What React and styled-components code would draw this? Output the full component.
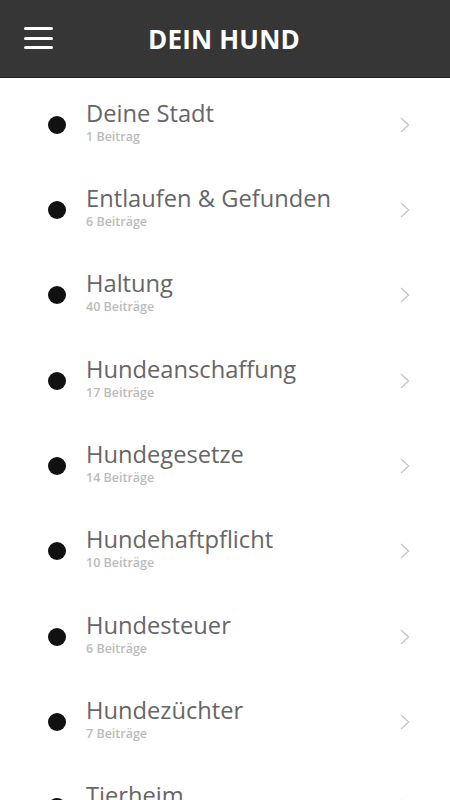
import styled, { createGlobalStyle } from "styled-components";

const topics = [
  { name: "Deine Stadt", count: "1 Beitrag" },
  { name: "Entlaufen & Gefunden", count: "6 Beiträge" },
  { name: "Haltung", count: "40 Beiträge" },
  { name: "Hundeanschaffung", count: "17 Beiträge" },
  { name: "Hundegesetze", count: "14 Beiträge" },
  { name: "Hundehaftpflicht", count: "10 Beiträge" },
  { name: "Hundesteuer", count: "6 Beiträge" },
  { name: "Hundezüchter", count: "7 Beiträge" },
  { name: "Tierheim", count: "3 Beiträge" },
];

const App = () => {
  return (
    <>
      <GlobalStyle />
      <Page>
        <Header>
          <MenuButton aria-label="Menü">
            <span />
            <span />
            <span />
          </MenuButton>
          <Title>DEIN HUND</Title>
        </Header>
        <List>
          {topics.map((t) => (
            <Row key={t.name}>
              <Dot />
              <Texts>
                <Name>{t.name}</Name>
                <Count>{t.count}</Count>
              </Texts>
              <Chevron viewBox="0 0 12 18">
                <path d="M2 2 L9.5 9 L2 16" />
              </Chevron>
            </Row>
          ))}
        </List>
      </Page>
    </>
  );
};

export default App;

const GlobalStyle = createGlobalStyle`
  html, body {
    margin: 0;
    padding: 0;
    background: #fff;
    font-family: "Open Sans", "Noto Sans", sans-serif;
  }
`;

const Page = styled.div`
  width: 450px;
  height: 800px;
  overflow: hidden;
  display: flex;
  flex-direction: column;
`;

const Header = styled.header`
  position: relative;
  height: 77px;
  flex-shrink: 0;
  background: #363636;
  border-bottom: 1px solid #222;
  display: flex;
  align-items: center;
  justify-content: center;
`;

const MenuButton = styled.button`
  position: absolute;
  left: 24px;
  top: 27px;
  width: 29px;
  height: 22px;
  padding: 0;
  border: none;
  background: transparent;
  display: flex;
  flex-direction: column;
  justify-content: space-between;

  span {
    display: block;
    height: 3px;
    border-radius: 2px;
    background: #fff;
  }
`;

const Title = styled.h1`
  margin: 0 0 0 -2px;
  color: #fff;
  font-size: 26px;
  font-weight: 700;
  letter-spacing: 0.2px;
`;

const List = styled.ul`
  list-style: none;
  margin: 0;
  padding: 4px 0 0;
`;

const Row = styled.li`
  height: 85.33px;
  display: flex;
  align-items: center;
  padding: 0 39px 0 48px;
`;

const Dot = styled.div`
  width: 18px;
  height: 18px;
  border-radius: 50%;
  background: #111;
  flex-shrink: 0;
  margin-right: 20px;
`;

const Texts = styled.div`
  flex: 1;
  display: flex;
  flex-direction: column;
  margin-top: -6px;
`;

const Name = styled.span`
  font-size: 23.7px;
  color: #666;
  line-height: 30px;
`;

const Count = styled.span`
  font-size: 12.5px;
  font-weight: 600;
  color: #bbb;
  line-height: 18px;
`;

const Chevron = styled.svg`
  width: 12px;
  height: 18px;
  fill: none;
  stroke: #c8c8c8;
  stroke-width: 1.5;
`;
